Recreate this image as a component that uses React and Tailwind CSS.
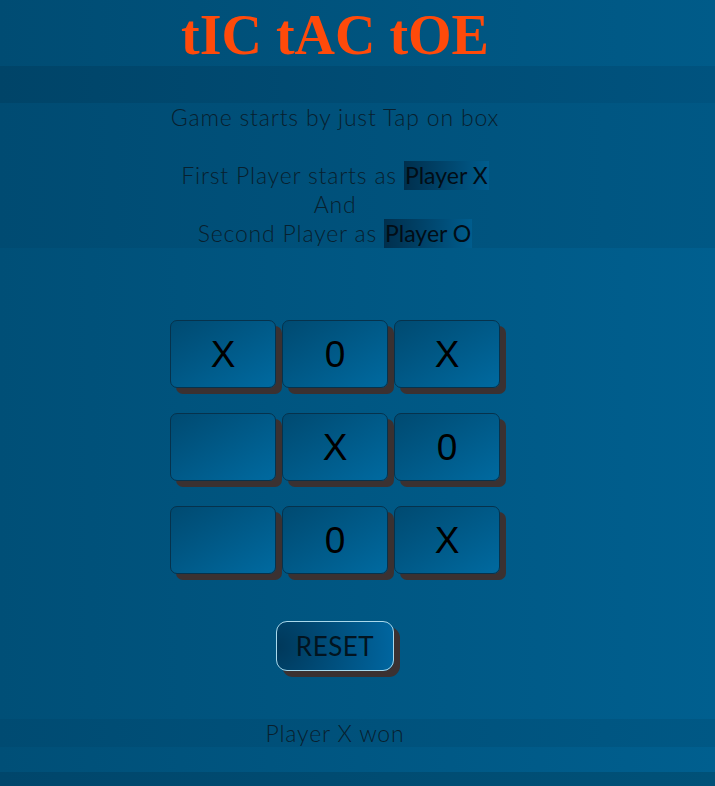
import React, { useState } from "react";

const initialBoard = ["X", "0", "X", "", "X", "0", "", "0", "X"];

const thin = { fontFamily: "Lato, 'Open Sans', sans-serif" };

const Cell = ({ value, onClick }) => (
  <button
    type="button"
    onClick={onClick}
    className="h-[68px] w-[106px] rounded-[7px] border border-[#06324c] bg-gradient-to-br from-[#004a71] to-[#006aa0] text-[37px] leading-none text-black shadow-[6px_6px_0_#3b3131]"
    style={{ fontFamily: "'Liberation Sans', Arial, sans-serif" }}
  >
    {value}
  </button>
);

export default function App() {
  const [board, setBoard] = useState(initialBoard);

  const handleReset = () => {
    setBoard(Array(9).fill(""));
  };

  return (
    <div className="min-h-[786px] w-full bg-gradient-to-r from-[#004f77] to-[#005f8f] text-[#061c2b]">
      <h1 className="h-[66px] w-full bg-gradient-to-r from-[#004c73] to-[#005b89]">
        <div
          className="w-[670px] pt-[5px] text-center text-[56px] font-bold leading-[60px] text-[#ff4a0a]"
          style={{ fontFamily: "'Liberation Serif', 'Times New Roman', serif" }}
        >
          tIC tAC tOE
        </div>
      </h1>

      <div className="h-[37px] w-full bg-gradient-to-r from-[#004468] to-[#00537f]" />

      <div className="w-full bg-gradient-to-r from-[#004b72] to-[#005885]">
        <p
          className="w-[670px] text-center text-[23px] font-light leading-[29px] tracking-[0.8px] text-[#08202e]"
          style={thin}
        >
          Game starts by just Tap on box
          <br />
          <br />
          First Player starts as{" "}
          <span className="inline-block bg-gradient-to-r from-[#002f4d] to-[#005d8e] px-[1px] font-normal tracking-normal text-[#020d16]">
            Player X
          </span>
          <br />
          And
          <br />
          Second Player as{" "}
          <span className="inline-block bg-gradient-to-r from-[#002f4d] to-[#005d8e] px-[1px] font-normal tracking-normal text-[#020d16]">
            Player O
          </span>
        </p>
      </div>

      <div className="flex w-[670px] flex-col items-center pt-[72px]">
        <div className="grid grid-cols-3 gap-x-[6px] gap-y-[25px]">
          {board.map((v, i) => (
            <Cell
              key={i}
              value={v}
              onClick={() => {
                const next = [...board];
                next[i] = next[i] ? next[i] : "X";
                setBoard(next);
              }}
            />
          ))}
        </div>

        <button
          type="button"
          onClick={handleReset}
          className="mt-[47px] h-[50px] w-[118px] rounded-[11px] border border-[#a9d9ec] bg-[radial-gradient(circle_at_left,#00385a,#0066a0)] text-[26px] tracking-[0.5px] text-[#021420] shadow-[6px_6px_0_#3b3131]"
          style={{ fontFamily: "Lato, sans-serif" }}
        >
          RESET
        </button>
      </div>

      <div className="mt-[48px] h-[28px] w-full bg-gradient-to-r from-[#004b72] to-[#005885]">
        <div
          className="w-[670px] text-center text-[23px] font-light leading-[28px] tracking-[0.8px] text-[#08202e]"
          style={thin}
        >
          Player X won
        </div>
      </div>

      <div className="h-[25px] w-full" />
      <div className="h-[14px] w-full bg-gradient-to-r from-[#00466b] to-[#005178]" />
    </div>
  );
}
